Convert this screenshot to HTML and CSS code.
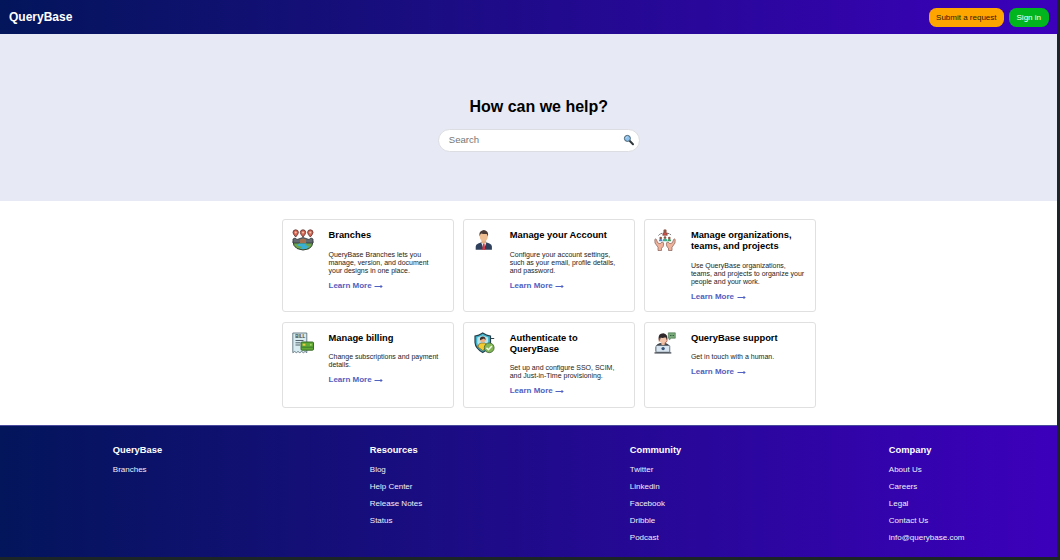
FILE: index.html
```html
<!DOCTYPE html>
<html lang="en">
<head>
<meta charset="utf-8">
<title>QueryBase</title>
<link rel="stylesheet" href="styles.css">
</head>
<body>
<div class="page">
  <header class="topbar">
    <div class="brand">QueryBase</div>
    <nav class="actions">
      <a class="btn btn-request">Submit a request</a>
      <a class="btn btn-signin">Sign in</a>
    </nav>
  </header>

  <section class="hero">
    <h1>How can we help?</h1>
    <div class="search">
      <span>Search</span>
      <svg class="lens" viewBox="0 0 12 12">
        <path d="M6.6 6.8 10 10.2" stroke="#30383c" stroke-width="2" stroke-linecap="round"/>
        <circle cx="4.4" cy="4.4" r="3" fill="#8dc3ee" stroke="#48606e" stroke-width="1"/>
        <path d="M2.8 4.2Q3 3 4.4 2.8" fill="none" stroke="#d5edff" stroke-width=".7"/>
      </svg>
    </div>
  </section>

  <main class="cards">
    <article class="card">
      <svg class="icon" viewBox="0 0 22 22">
        <path d="M1 12.5h20q-.3 5-4 7.200Q11 22.500 5 19.500 1 17 1 12.500Z" fill="#6ca64e" stroke="#29332f" stroke-width=".9"/>
        <path d="M1 14V10l2-1 2 1.500 3-1 3-1 3 1 3 1 2-1.500 2 1v4Z" fill="#626970" stroke="#30363b" stroke-width=".8"/>
        <path d="M8 14V10.500l3-1 3 1V14Z" fill="#a5704e"/>
        <path d="M7 14.500h8l-2 1.500 4 1.500-3 2.500H8l2-2-5-1.500Z" fill="#39afd5"/>
        <g fill="#d76554" stroke="#55302d" stroke-width=".8">
          <path d="M3.700 8Q1 5 1 3.500a2.700 2.700 0 0 1 5.400 0Q6.400 5 3.700 8Z"/>
          <path d="M11 8Q8.300 5 8.300 3.500a2.700 2.700 0 0 1 5.400 0Q13.700 5 11 8Z"/>
          <path d="M18.300 8Q15.600 5 15.600 3.500a2.700 2.700 0 0 1 5.400 0Q21 5 18.300 8Z"/>
        </g>
        <g fill="#f1c5ab"><circle cx="3.700" cy="3.500" r="1"/><circle cx="11" cy="3.500" r="1"/><circle cx="18.300" cy="3.500" r="1"/></g>
      </svg>
      <div class="body">
        <h2>Branches</h2>
        <p>QueryBase Branches lets you manage, version, and document your designs in one place.</p>
        <a class="more">Learn More <svg class="arrow" viewBox="0 0 9 6"><path d="M.5 3.500H8M6.500 2 8 3.500 6.500 5"/></svg></a>
      </div>
    </article>

    <article class="card">
      <svg class="icon" viewBox="0 0 22 22">
        <path d="M2.700 20.700v-3.200q0-2.200 2.500-3l4-1.500h3.200l4 1.500q2.500.8 2.500 3v3.200Z" fill="#2f405d"/>
        <path d="M8.500 11h4.600v3l-2.300 2.500-2.300-2.500Z" fill="#e4ad82"/>
        <path d="m8.200 13.500 2.600 7.200 2.600-7.200-2.600 1.500Z" fill="#eef0f3"/>
        <path d="m10 15 .8-.5.8.5.7 5.700H9.300Z" fill="#d63645"/>
        <ellipse cx="10.800" cy="7.500" rx="4" ry="5" fill="#efbd92"/>
        <path d="M6.700 7.500Q5.800 4 7.500 2.500 11-.5 14 2.500q1.700 1.500.8 5l-1-2.500q-3 .4-5.500-.5Q7 5 6.700 7.500Z" fill="#4b3b36"/>
      </svg>
      <div class="body">
        <h2>Manage your Account</h2>
        <p>Configure your account settings, such as your email, profile details, and password.</p>
        <a class="more">Learn More <svg class="arrow" viewBox="0 0 9 6"><path d="M.5 3.500H8M6.500 2 8 3.500 6.500 5"/></svg></a>
      </div>
    </article>

    <article class="card">
      <svg class="icon" viewBox="0 0 22 22">
        <path d="M4.500 6.500Q6 4.500 9 4.200M13 4.200q3 .3 4.500 2.300" fill="none" stroke="#555" stroke-width=".9" stroke-dasharray="1.800 .7"/>
        <g fill="#efb39c" stroke="#855d54" stroke-width=".7" stroke-linejoin="round">
          <path d="M.8 10.500q1.200-1.500 1.700.3l1.200 3 2.300 1L8 13q1.700 0 1.700 2 0 3-2.200 4.200V21.500H4V18.300L1 14Z"/>
          <path d="M21.200 10.500q-1.200-1.500-1.700.3l-1.200 3-2.300 1L14 13q-1.700 0-1.700 2 0 3 2.200 4.200V21.500H18V18.300L21 14Z"/>
        </g>
        <path d="M8.800 12.300q0-3 2.200-3t2.200 3Z" fill="#3eac8b"/>
        <path d="M13.400 12.300q0-2.600 1.900-2.600t1.900 2.600Z" fill="#3c9d62"/>
        <path d="M4.800 12.300q0-2.600 1.900-2.600t1.900 2.600Z" fill="#4f86c8"/>
        <path d="M8.700 6.300Q8.800 3 11 3T13.300 6.300Z" fill="#ce5046" stroke="#6d3d38" stroke-width=".6"/>
        <g fill="#8d5747"><circle cx="11" cy="2" r="1.700"/><circle cx="6.700" cy="9" r="1.300"/><circle cx="11" cy="8.500" r="1.300"/><circle cx="15.300" cy="9" r="1.300"/></g>
      </svg>
      <div class="body">
        <h2>Manage organizations, teams, and projects</h2>
        <p>Use QueryBase organizations, teams, and projects to organize your people and your work.</p>
        <a class="more">Learn More <svg class="arrow" viewBox="0 0 9 6"><path d="M.5 3.500H8M6.500 2 8 3.500 6.500 5"/></svg></a>
      </div>
    </article>

    <article class="card">
      <svg class="icon" viewBox="0 0 22 22">
        <path d="M.8 1h14v19.700l-1.700-1.200-1.700 1.200-1.800-1.200-1.800 1.200L6 19.500l-1.700 1.200-1.600-1.200-1.900 1.200Z" fill="#d7ebf1" stroke="#4b626d" stroke-width=".8"/>
        <text class="bill" x="3.300" y="6">BILL</text>
        <path d="M3.500 8.500h8M3.500 10.800h5M3.500 13h4.500" stroke="#46545c" stroke-width=".9"/>
        <rect x="9" y="10" width="12.500" height="8.200" rx="1" fill="#60a934" stroke="#315d22" stroke-width=".9"/>
        <rect x="10.700" y="11.700" width="2.700" height="2" fill="#f1ca45"/>
        <path d="M9.500 15.200h11.500" stroke="#39762b" stroke-width=".9"/>
        <circle cx="18.800" cy="12.700" r="1" fill="#a2d56b"/>
      </svg>
      <div class="body">
        <h2>Manage billing</h2>
        <p>Change subscriptions and payment details.</p>
        <a class="more">Learn More <svg class="arrow" viewBox="0 0 9 6"><path d="M.5 3.500H8M6.500 2 8 3.500 6.500 5"/></svg></a>
      </div>
    </article>

    <article class="card">
      <svg class="icon" viewBox="0 0 22 22">
        <path d="M9.700 1Q6 3.500 2 4v6.500Q2.500 16.500 9.700 20.500 17 16.500 17.500 10.500V4Q13.500 3.500 9.700 1Z" fill="#40b4cd" stroke="#253d48" stroke-width="1.200"/>
        <path d="M9.700 3.500 4.300 5.500v5Q4.800 15 9.700 18q4.900-3 5.400-7.500v-5Z" fill="#b7e5ea"/>
        <path d="M5 15q.2-3.500 3-4h3.500q2.500.6 2.700 4L9.700 18.500Z" fill="#f4cc32" stroke="#5c4b24" stroke-width=".6"/>
        <circle cx="9.700" cy="7.800" r="2.600" fill="#eeb184"/>
        <path d="M7 8.200Q6.500 4.500 9.700 4.500t2.800 3.700L11 6.500Q8.500 7.500 7 8.200Z" fill="#40302d"/>
        <path d="M17.500 6.500h3.700" stroke="#31444b" stroke-width="1"/>
        <circle cx="16.200" cy="15.800" r="4.900" fill="#83b755" stroke="#3b6133" stroke-width=".8"/>
        <path d="m13.500 15.800 1.900 1.900 3.500-3.700" fill="none" stroke="#f1f8e9" stroke-width="1.500"/>
      </svg>
      <div class="body">
        <h2>Authenticate to QueryBase</h2>
        <p>Set up and configure SSO, SCIM, and Just-in-Time provisioning.</p>
        <a class="more">Learn More <svg class="arrow" viewBox="0 0 9 6"><path d="M.5 3.500H8M6.500 2 8 3.500 6.500 5"/></svg></a>
      </div>
    </article>

    <article class="card">
      <svg class="icon" viewBox="0 0 22 22">
        <path d="M2 15.500q.5-3.500 4-4h5.500q3.500.5 4 4v4H2Z" fill="#4b4f56" stroke="#282a2e" stroke-width=".7"/>
        <path d="M7.300 10h3.500v2.500L9 13.500l-1.700-1Z" fill="#edb69a"/>
        <circle cx="9" cy="7.200" r="3.800" fill="#f2c5aa"/>
        <path d="M4.700 7.500Q4 3 7 1.700q4-1.700 6 2 .7 2-.1 4.500L11.500 5.300Q8 6.500 6.700 5.500L5.700 9Z" fill="#30282a"/>
        <path d="M5.200 6.200v3.300M13 6.200v2.500q-.2 1.800-2.200 2" fill="none" stroke="#b66c57" stroke-width="1"/>
        <rect x="2" y="13.500" width="13.800" height="6.700" rx=".7" fill="#d9e6f1" stroke="#53606b" stroke-width=".7"/>
        <path d="M.5 20.900h16.800" stroke="#343a42" stroke-width="1.200"/>
        <circle cx="9.100" cy="16.600" r="1.700" fill="#37557a"/>
        <path d="M14.300.8h7v5.400h-4l-2 1.600V6.200h-1Z" fill="#78aa7a" stroke="#486c4e" stroke-width=".6"/>
        <path d="M16 3.500h.8m.8 0h.8m.8 0h.8" stroke="#294f35" stroke-width="1"/>
      </svg>
      <div class="body">
        <h2>QueryBase support</h2>
        <p>Get in touch with a human.</p>
        <a class="more">Learn More <svg class="arrow" viewBox="0 0 9 6"><path d="M.5 3.500H8M6.500 2 8 3.500 6.500 5"/></svg></a>
      </div>
    </article>
  </main>

  <footer class="footer">
    <div class="col"><h3>QueryBase</h3><a>Branches</a></div>
    <div class="col"><h3>Resources</h3><a>Blog</a><a>Help Center</a><a>Release Notes</a><a>Status</a></div>
    <div class="col"><h3>Community</h3><a>Twitter</a><a>Linkedin</a><a>Facebook</a><a>Dribble</a><a>Podcast</a></div>
    <div class="col"><h3>Company</h3><a>About Us</a><a>Careers</a><a>Legal</a><a>Contact Us</a><a>info@querybase.com</a></div>
  </footer>
</div>
</body>
</html>
```
FILE: styles.css
```css
* { box-sizing: border-box; }
html { background: #1b2527; }
body {
  margin: 0;
  height: 560px;
  overflow: hidden;
  padding: 0 3px 3px 0;
  background: #1b2527;
  font-family: "Liberation Sans", Arial, sans-serif;
}
h1, h2, h3, p { margin: 0; }
.page {
  height: 557px;
  display: flex;
  flex-direction: column;
  background: #fff;
}
.topbar {
  height: 34px;
  flex: none;
  display: flex;
  align-items: center;
  justify-content: space-between;
  padding: 0 8.500px 0 9px;
  background: linear-gradient(90deg, #03155b, #3c00bb);
}
.brand { color: #fff; font-size: 12px; font-weight: 700; }
.actions { display: flex; gap: 5px; }
.btn {
  height: 19px;
  padding: 0 7.500px;
  border-radius: 7.5px;
  font-size: 8px;
  line-height: 19px;
}
.btn-request { background: #ffa500; color: #2a1a00; }
.btn-signin { background: #00b51e; color: #fff; }
.hero {
  height: 167px;
  flex: none;
  display: flex;
  flex-direction: column;
  align-items: center;
  padding: 64px 0 0 20.500px;
  background: #e7eaf5;
}
.hero h1 { font-size: 16px; line-height: 18px; }
.search {
  width: 202px;
  height: 22.500px;
  margin-top: 13px;
  padding: 0 4px 1px 10px;
  display: flex;
  align-items: center;
  justify-content: space-between;
  border: 1px solid #dcdde2;
  border-radius: 12px;
  background: #fff;
  color: #757575;
  font-size: 9.600px;
}
.lens { width: 12px; height: 12px; }
.cards {
  display: grid;
  grid-template-columns: repeat(3, 171.500px);
  grid-template-rows: 93px 85.500px;
  gap: 10px 9.700px;
  padding: 18px 0 0 282px;
  height: 224px;
  flex: none;
}
.card {
  display: flex;
  padding: 9px 9px 0 9px;
  border: 1px solid #e0e0e0;
  border-radius: 3px;
}
.icon { width: 22px; height: 22px; flex: none; margin-right: 14.500px; }
.body { padding-top: 1px; flex: 1; min-width: 0; }
.body h2 { font-size: 9.36px; line-height: 11px; color: #000; }
.body p {
  margin-top: 10px;
  font-size: 7px;
  line-height: 8px;
  color: #242424;
}
.card:nth-child(n+4) p { margin-top: 9px; }
.more {
  display: flex;
  align-items: center;
  gap: 2.500px;
  margin-top: 6.400px;
  font-size: 8px;
  line-height: 9px;
  font-weight: 700;
  color: #5061bf;
}
.arrow {
  width: 9px;
  height: 6px;
  fill: none;
  stroke: #5061bf;
  stroke-width: 1;
}
.bill { font: 700 4.500px "Liberation Sans", Arial, sans-serif; fill: #33424a; }
.footer {
  flex: 1;
  display: grid;
  grid-template-columns: 257px 260px 259px auto;
  padding: 19px 0 0 112.800px;
  background: linear-gradient(90deg, #03155b, #3c00bb);
  border-top: 1px solid #4a4a9c;
}
.col { display: flex; flex-direction: column; color: #fff; }
.col h3 { font-size: 9.36px; line-height: 11px; margin-bottom: 5px; }
.col a { font-size: 8px; line-height: 17px; color: #f0effa; }
```
